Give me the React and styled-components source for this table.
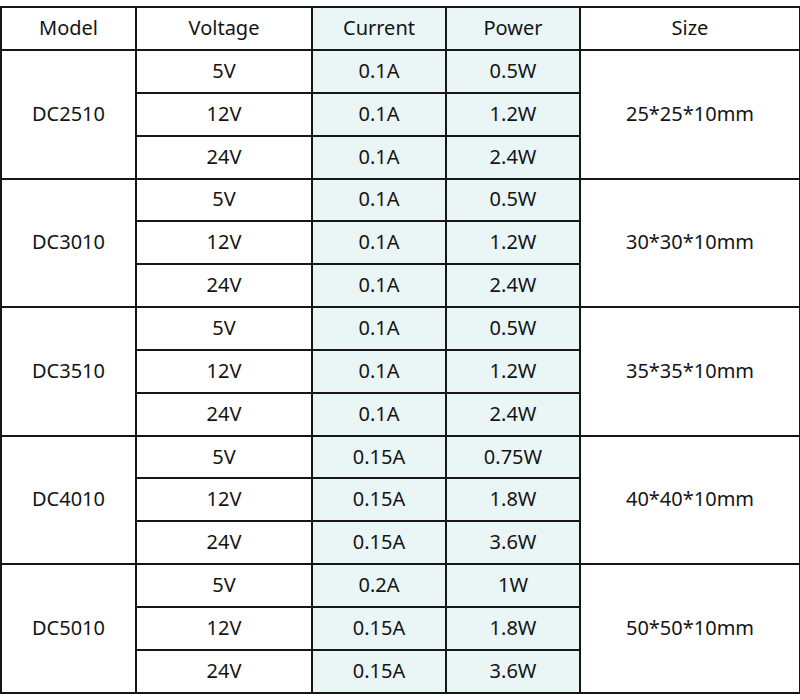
import React from "react";
import styled, { createGlobalStyle } from "styled-components";

const Global = createGlobalStyle`
  html, body { margin: 0; padding: 0; background: #fff; }
  body { font-family: "Noto Sans", "Open Sans", "DejaVu Sans", sans-serif; }
`;

const Page = styled.div`
  padding-top: 6px;
  width: 800px;
`;

const Table = styled.table`
  width: 799px;
  border-collapse: collapse;
  table-layout: fixed;
  color: #141414;
  font-size: 20px;
`;

const Row = styled.tr`
  height: ${(p) => p.$h}px;
`;

const Cell = styled.td`
  border: 2px solid #161616;
  padding: 0;
  text-align: center;
  vertical-align: middle;
  font-weight: 400;
  background: ${(p) => (p.$tint ? "#eaf5f6" : "#fff")};
  line-height: 1;
  padding-bottom: 1px;
`;

const Head = styled(Cell).attrs({ as: "th" })``;

const data = [
  { model: "DC2510", size: "25*25*10mm", rows: [["5V", "0.1A", "0.5W"], ["12V", "0.1A", "1.2W"], ["24V", "0.1A", "2.4W"]] },
  { model: "DC3010", size: "30*30*10mm", rows: [["5V", "0.1A", "0.5W"], ["12V", "0.1A", "1.2W"], ["24V", "0.1A", "2.4W"]] },
  { model: "DC3510", size: "35*35*10mm", rows: [["5V", "0.1A", "0.5W"], ["12V", "0.1A", "1.2W"], ["24V", "0.1A", "2.4W"]] },
  { model: "DC4010", size: "40*40*10mm", rows: [["5V", "0.15A", "0.75W"], ["12V", "0.15A", "1.8W"], ["24V", "0.15A", "3.6W"]] },
  { model: "DC5010", size: "50*50*10mm", rows: [["5V", "0.2A", "1W"], ["12V", "0.15A", "1.8W"], ["24V", "0.15A", "3.6W"]] },
];

export default function App() {
  return (
    <Page>
      <Global />
      <Table>
        <colgroup>
          <col style={{ width: 135 }} />
          <col style={{ width: 176 }} />
          <col style={{ width: 134 }} />
          <col style={{ width: 134 }} />
          <col style={{ width: 220 }} />
        </colgroup>
        <thead>
          <Row $h={43}>
            <Head>Model</Head>
            <Head>Voltage</Head>
            <Head $tint>Current</Head>
            <Head $tint>Power</Head>
            <Head>Size</Head>
          </Row>
        </thead>
        <tbody>
          {data.map((g) =>
            g.rows.map((r, i) => (
              <Row $h={42.85} key={g.model + i}>
                {i === 0 && <Cell rowSpan={3}>{g.model}</Cell>}
                <Cell>{r[0]}</Cell>
                <Cell $tint>{r[1]}</Cell>
                <Cell $tint>{r[2]}</Cell>
                {i === 0 && <Cell rowSpan={3}>{g.size}</Cell>}
              </Row>
            ))
          )}
        </tbody>
      </Table>
    </Page>
  );
}
